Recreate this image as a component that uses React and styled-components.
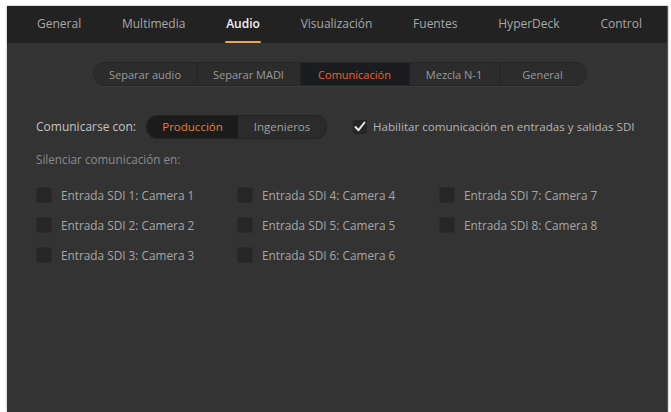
import styled, { createGlobalStyle } from "styled-components";

const GlobalStyle = createGlobalStyle`
  html, body {
    margin: 0;
    background: #ffffff;
  }
  body {
    font-family: "Open Sans", "DejaVu Sans", sans-serif;
  }
`;

const Panel = styled.div`
  margin: 6px 0 0 7px;
  width: 660px;
  height: 406px;
  background: #333333;
  border-right: 1px solid #555;
  box-shadow: 0 0 2px rgba(0, 0, 0, 0.4);
  display: flex;
  flex-direction: column;
`;

const TabBar = styled.nav`
  height: 37px;
  background: #222222;
  display: flex;
  justify-content: space-between;
  align-items: stretch;
  padding: 0 25px 0 30px;
`;

const Tab = styled.div`
  position: relative;
  display: flex;
  align-items: center;
  padding: 0 0 2px;
  font-size: 12px;
  color: ${(p) => (p.$active ? "#f2f2f2" : "#a8a8a8")};
  font-weight: ${(p) => (p.$active ? 600 : 400)};

  &::after {
    content: "";
    display: ${(p) => (p.$active ? "block" : "none")};
    position: absolute;
    left: -1px;
    right: -1px;
    bottom: 0;
    height: 2px;
    border-radius: 1px;
    background: #e9a54a;
  }
`;

const Content = styled.div`
  flex: 1;
  display: flex;
  flex-direction: column;
  padding: 19px 16px 0 29px;
`;

const SubTabs = styled.div`
  align-self: center;
  margin-right: 8px;
  display: flex;
  height: 22px;
  border-radius: 11px;
  background: #2c2c2c;
  border: 1px solid #262626;
  box-shadow: 0 1px 1px rgba(255, 255, 255, 0.05);
  overflow: hidden;
`;

const SubTab = styled.div`
  width: ${(p) => p.$w}px;
  display: flex;
  align-items: center;
  justify-content: center;
  font-size: 11px;
  color: ${(p) => (p.$active ? "#e8642c" : "#9a9a9a")};
  background: ${(p) => (p.$active ? "#1a1c20" : "transparent")};
  border-left: ${(p) => (p.$first ? "none" : "1px solid #242424")};
`;

const Row = styled.div`
  display: flex;
  align-items: center;
  margin-top: 29px;
  height: 23px;
  white-space: nowrap;
`;

const Label = styled.span`
  font-size: 12px;
  color: #c4c4c4;
  margin-right: 10px;
  flex-shrink: 0;
`;

const Segmented = styled.div`
  display: flex;
  flex-shrink: 0;
  height: 22px;
  border-radius: 11px;
  background: #2b2b2b;
  border: 1px solid #242424;
  overflow: hidden;
`;

const Segment = styled.div`
  width: ${(p) => p.$w}px;
  display: flex;
  align-items: center;
  justify-content: center;
  font-size: 11.5px;
  color: ${(p) => (p.$active ? "#e0803a" : "#a0a0a0")};
  background: ${(p) => (p.$active ? "#1b1b1b" : "transparent")};
`;

const Enable = styled.div`
  display: flex;
  align-items: center;
  flex-shrink: 0;
  margin-left: 26px;
  gap: 6px;
  font-size: 11.6px;
  color: #b4b4b4;
`;

const CheckMark = styled.span`
  width: 14px;
  height: 14px;
  display: flex;
  align-items: center;
  justify-content: center;
  background: #262626;
  border-radius: 2px;
`;

const SectionTitle = styled.div`
  margin-top: 13px;
  font-size: 11.7px;
  color: #8a8a8a;
`;

const Grid = styled.div`
  margin-top: 19px;
  display: grid;
  grid-template-columns: 201px 202px 1fr;
  row-gap: 13px;
`;

const Item = styled.label`
  display: flex;
  align-items: center;
  gap: 9px;
  font-size: 11.8px;
  color: #a6a6a6;
  height: 17px;
  white-space: nowrap;
`;

const Box = styled.span`
  width: 16px;
  height: 16px;
  border-radius: 2px;
  background: #262626;
  border: 1px solid #2c2c2c;
  box-sizing: border-box;
`;

const tabs = [
  "General",
  "Multimedia",
  "Audio",
  "Visualización",
  "Fuentes",
  "HyperDeck",
  "Control",
];

const subTabs = [
  { label: "Separar audio", w: 103 },
  { label: "Separar MADI", w: 102 },
  { label: "Comunicación", w: 108, active: true },
  { label: "Mezcla N-1", w: 89 },
  { label: "General", w: 86 },
];

const inputs = [1, 4, 7, 2, 5, 8, 3, 6];

export default function App() {
  return (
    <>
      <GlobalStyle />
      <Panel>
        <TabBar>
          {tabs.map((t) => (
            <Tab key={t} $active={t === "Audio"}>
              {t}
            </Tab>
          ))}
        </TabBar>
        <Content>
          <SubTabs>
            {subTabs.map((s, i) => (
              <SubTab key={s.label} $w={s.w} $active={s.active} $first={i === 0}>
                {s.label}
              </SubTab>
            ))}
          </SubTabs>

          <Row>
            <Label>Comunicarse con:</Label>
            <Segmented>
              <Segment $w={91} $active>
                Producción
              </Segment>
              <Segment $w={88}>Ingenieros</Segment>
            </Segmented>
            <Enable>
              <CheckMark>
                <svg width="12" height="11" viewBox="0 0 12 11">
                  <path
                    d="M1.5 6 L4.5 9.2 L10.5 1.5"
                    fill="none"
                    stroke="#e6e6e6"
                    strokeWidth="2"
                    strokeLinecap="round"
                    strokeLinejoin="round"
                  />
                </svg>
              </CheckMark>
              Habilitar comunicación en entradas y salidas SDI
            </Enable>
          </Row>

          <SectionTitle>Silenciar comunicación en:</SectionTitle>

          <Grid>
            {inputs.map((n) => (
              <Item key={n}>
                <Box />
                Entrada SDI {n}: Camera {n}
              </Item>
            ))}
          </Grid>
        </Content>
      </Panel>
    </>
  );
}
